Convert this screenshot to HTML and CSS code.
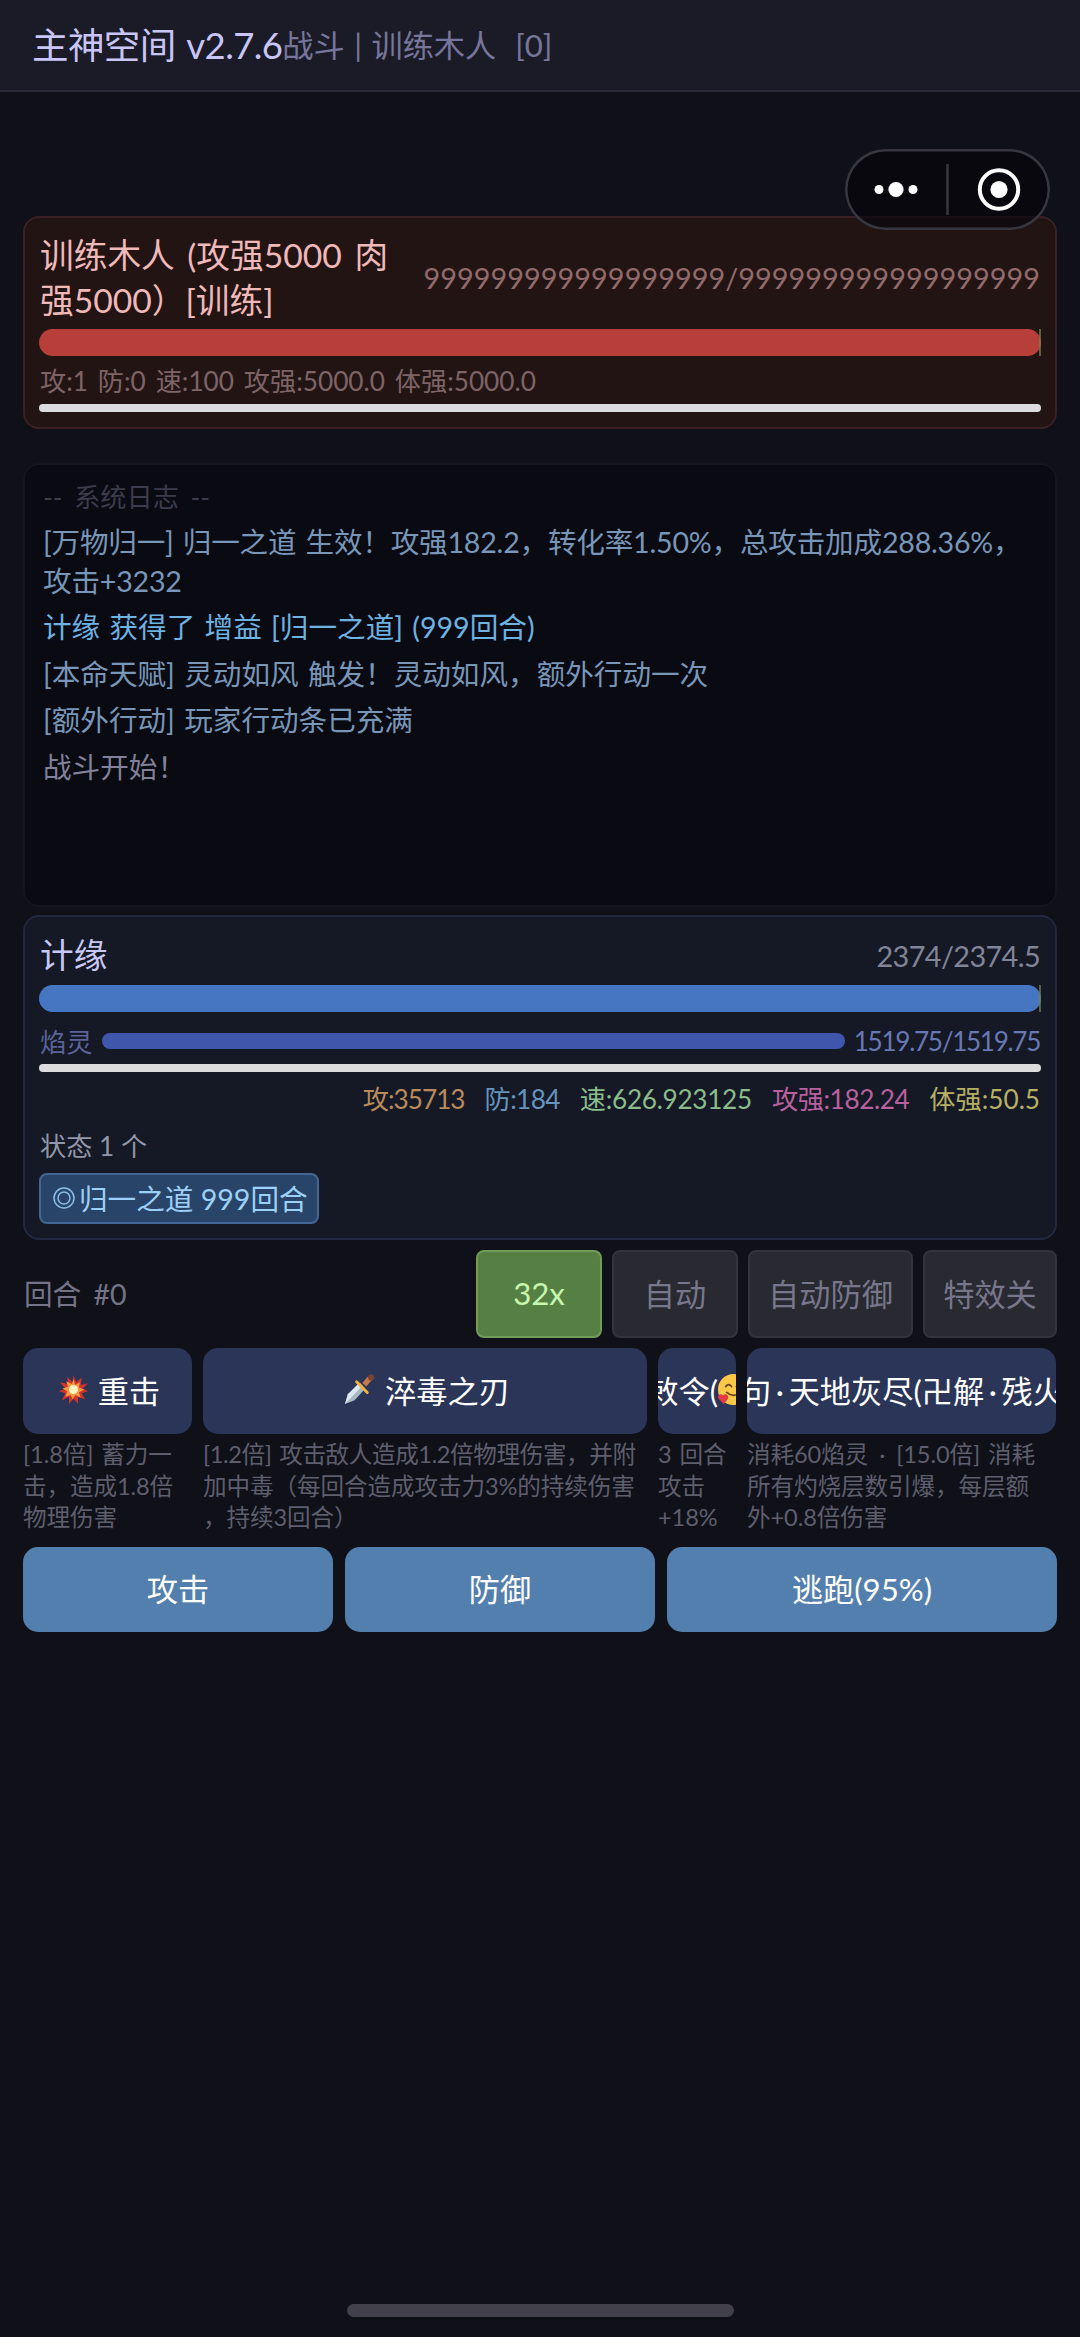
FILE: index.html
```
<!DOCTYPE html>
<html lang="zh-CN">
<head>
<meta charset="utf-8">
<title>主神空间</title>
<link rel="stylesheet" href="styles.css">
</head>
<body>
<header class="topbar">
  <h1 class="app-title">主神空间 v2.7.6</h1>
  <span class="app-sub">战斗 | 训练木人&nbsp; [0]</span>
</header>

<div class="capsule">
  <svg class="capsule-icon" width="205" height="81" viewBox="0 0 205 81">
    <g fill="#fff"><circle cx="34" cy="40.5" r="4.5"/><circle cx="51" cy="40.5" r="7.6"/><circle cx="68" cy="40.5" r="4.5"/><circle cx="154" cy="40.5" r="8.6"/></g>
    <path d="M102.500 15v51" stroke="#38363f" stroke-width="2.500"/>
    <circle cx="154" cy="40.500" r="19.200" fill="none" stroke="#fff" stroke-width="4"/>
  </svg>
</div>

<main class="battle">
  <section class="card enemy">
    <div class="head">
      <div class="name">训练木人 (攻强5000 肉强5000）[训练]</div>
      <div class="hp-text enemy-hp">999999999999999999/999999999999999999</div>
    </div>
    <div class="hp-bar red"></div>
    <div class="enemy-stats">攻:1 防:0 速:100 攻强:5000.0 体强:5000.0</div>
    <div class="action-bar"></div>
  </section>

  <section class="log">
    <p class="log-title">-- 系统日志 --</p>
    <p class="info first">[万物归一] 归一之道 生效！攻强182.2，转化率1.50%，总攻击加成288.36%，<br>攻击+3232</p>
    <p class="buff">计缘 获得了 增益 [归一之道] (999回合)</p>
    <p class="info">[本命天赋] 灵动如风 触发！灵动如风，额外行动一次</p>
    <p class="info">[额外行动] 玩家行动条已充满</p>
    <p class="plain">战斗开始！</p>
  </section>

  <section class="card player">
    <div class="head">
      <div class="name">计缘</div>
      <div class="hp-text">2374/2374.5</div>
    </div>
    <div class="hp-bar blue"></div>
    <div class="mana"><span class="mana-name">焰灵</span><div class="mana-bar"></div><span class="mana-num">1519.75/1519.75</span></div>
    <div class="action-bar"></div>
    <div class="stats">
      <span class="atk">攻:35713</span><span class="def">防:184</span><span class="spd">速:626.923125</span><span class="pow">攻强:182.24</span><span class="vit">体强:50.5</span>
    </div>
    <div class="status">状态 1 个</div>
    <div class="chip"><svg width="22" height="22" viewBox="0 0 22 22" fill="none" stroke="#8bbfe8" stroke-width="1.500"><circle cx="11" cy="11" r="10"/><circle cx="11" cy="11" r="6"/></svg><span>归一之道 999回合</span></div>
  </section>

  <div class="controls">
    <span class="round">回合 #0</span>
    <button class="ctl speed">32x</button>
    <button class="ctl auto">自动</button>
    <button class="ctl guard">自动防御</button>
    <button class="ctl fx">特效关</button>
  </div>

  <div class="skills">
    <div class="skill">
      <button class="skill-btn">
        <svg class="emoji" width="29" height="29" viewBox="0 0 32 32"><path fill="#d5322d" d="M16 0l3 8 6-5-1 8 8-2-6 6 6 3-7 2 4 7-8-3 0 8-5-6-5 6 0-8-8 4 4-8-7-2 7-3-6-7 9 2-1-8 6 6z"/><path fill="#f79a3e" d="M16 5l2 6 5-3-1 6 6 2-6 3 2 6-6-3-3 5-2-5-6 2 2-6-5-3 6-2-2-6 6 3z"/><circle cx="16" cy="16" r="5" fill="#fff3c4"/></svg>
        <span>重击</span>
      </button>
      <p>[1.8倍] 蓄力一<br>击，造成1.8倍<br>物理伤害</p>
    </div>
    <div class="skill">
      <button class="skill-btn">
        <svg class="emoji" width="31" height="31" viewBox="0 0 32 32"><path fill="#a7b8c4" d="M1 31l3-10 12-12 6 6-11 12z"/><path fill="#dce7ee" d="M1 31l3-10 12-12 3 3z"/><path d="M21 11l6-7" stroke="#c47a4c" stroke-width="5.500"/><circle cx="28" cy="3.500" r="3.200" fill="#7a4230"/><path d="M13 8l11 11" stroke="#f2b13c" stroke-width="3" stroke-linecap="round"/></svg>
        <span>淬毒之刃</span>
      </button>
      <p><span class="tight">[1.2倍] 攻击敌人造成1.2倍物理伤害，并附</span><br>加中毒（每回合造成攻击力3%的持续伤害<br>，持续3回合）</p>
    </div>
    <div class="skill">
      <button class="skill-btn cut">
        <span>敕令(</span>
        <svg class="face" width="31" height="31" viewBox="0 0 32 32"><circle cx="16" cy="16" r="16" fill="#fbc748"/><path d="M8 13q3-4 6 0M19 13q3-4 6 0M9 19q7 6 14 0" fill="none" stroke="#6d4322" stroke-width="1.800" stroke-linecap="round"/><path fill="#e33a45" d="M6 31l-5-5c-3-4 2-7 4-4 3-3 7 0 5 4z"/></svg>
      </button>
      <p>3 回合<br>攻击<br>+18%</p>
    </div>
    <div class="skill">
      <button class="skill-btn cut"><span class="long-name">句<i>·</i>天地灰尽(卍解<i>·</i>残火</span></button>
      <p>消耗60焰灵<i>·</i>[15.0倍] 消耗<br>所有灼烧层数引爆，每层额<br>外+0.8倍伤害</p>
    </div>
  </div>

  <div class="actions">
    <button>攻击</button>
    <button>防御</button>
    <button>逃跑(95%)</button>
  </div>
</main>
<div class="home-bar"></div>
</body>
</html>
```
FILE: styles.css
```
* { box-sizing: border-box; }
body {
  margin: 0;
  width: 1080px;
  height: 2337px;
  overflow: hidden;
  position: relative;
  background: #0f1018;
  font-family: Lato, "Noto Sans CJK SC", sans-serif;
  font-weight: 400;
  font-variant-ligatures: none;
  word-spacing: 2px;
}
p, h1 { margin: 0; font-weight: 400; }
button { border: 0; padding: 0 0 4px; font: inherit; }

.topbar {
  height: 92px;
  padding: 0 0 4px 32px;
  display: flex;
  align-items: center;
  background: #1b1b28;
  border-bottom: 2px solid #2b2a38;
}
.app-title { font-size: 36.5px; letter-spacing: -.6px; color: #c9c6f7; white-space: nowrap; }
.app-sub { font-size: 31.2px; word-spacing: 1.5px; color: #77769a; white-space: nowrap; }

.capsule {
  position: absolute;
  z-index: 2;
  left: 845px;
  top: 149px;
  width: 205px;
  height: 81px;
  border-radius: 41px;
  background: rgba(5, 4, 10, .6);
  box-shadow: inset 0 0 0 2.5px #38363f;
}
.capsule-icon { display: block; }

.battle { padding: 124px 23px 0; }
.card { border: 2px solid; border-radius: 16px; padding: 0 14px; }
.enemy { height: 213px; padding-top: 15px; background: #231414; border-color: #3a2125; }
.head { display: flex; justify-content: space-between; align-items: center; padding: 0 1px; }
.name { font-size: 33.7px; line-height: 45px; word-spacing: 4px; }
.enemy .name { width: 362px; color: #f0b9b9; }
.hp-text { font-size: 28.8px; letter-spacing: -.6px; }
.enemy-hp { color: #916a6c; letter-spacing: .06px; }
.hp-bar { height: 27px; margin-top: 6px; border-radius: 14px; position: relative; }
.hp-bar::after { content: ""; position: absolute; right: 0; top: 0; width: 2px; height: 27px; background: rgba(120, 130, 80, .7); }
.red { background: #b83e39; }
.blue { background: #4676c2; }
.enemy-stats { margin-top: 7px; padding-left: 1px; font-size: 26.2px; line-height: 36px; word-spacing: 3.2px; color: #7d6466; }
.action-bar { height: 8px; margin-top: 5px; border-radius: 4px; background: #dcdcdc; }

.log {
  height: 444px;
  margin-top: 34px;
  padding: 14px 18px;
  border: 2px solid #14151d;
  border-radius: 16px;
  background: #090a12;
  font-size: 28.6px;
  line-height: 38.6px;
  white-space: nowrap;
}
.log p + p { margin-top: 8px; }
.log .log-title { font-size: 26.2px; line-height: 36px; word-spacing: 5px; color: #3d3b4c; }
.info { color: #7896b8; }
.first { letter-spacing: -.2px; }
.buff { color: #6cb2e2; }
.plain { color: #83819a; }

.player { height: 325px; margin-top: 8px; padding-top: 16px; background: #151825; border-color: #222840; }
.player .name { color: #c8c8f5; }
.player .hp-text { color: #818598; }
.player .hp-bar { margin-top: 7px; }
.mana { display: flex; align-items: center; gap: 9px; height: 36px; margin-top: 11px; padding: 0 1px; font-size: 26.2px; }
.mana-name { color: #5b6498; width: 53px; }
.mana-bar { flex: 1; height: 16px; border-radius: 8px; background: #4056ac; }
.mana-num { color: #6778b4; letter-spacing: -1.35px; }
.player .action-bar { margin-top: 5px; }
.stats { display: flex; justify-content: flex-end; gap: 20px; margin-top: 8px; padding-right: 1px; font-size: 26.2px; line-height: 38px; }
.atk { color: #b98a5c; letter-spacing: -1px; }
.def { color: #6594bd; letter-spacing: -.6px; }
.spd { color: #8bbd8c; letter-spacing: -.3px; }
.pow { color: #b9619f; letter-spacing: -.4px; }
.vit { color: #b5b063; }
.status { margin-top: 10px; padding-left: 1px; font-size: 26.2px; line-height: 36px; word-spacing: 0; color: #9296a8; }
.chip {
  display: flex;
  align-items: center;
  gap: 4px;
  width: 280px;
  height: 51px;
  margin-top: 9px;
  padding: 0 0 2px 12px;
  border: 2px solid #436794;
  border-radius: 8px;
  background: #284468;
  color: #9dd0f7;
  font-size: 28.6px;
  word-spacing: 0;
  white-space: nowrap;
}

.controls { display: grid; grid-template-columns: 443px 126px 126px 165px 134px; column-gap: 10px; height: 88px; margin-top: 10px; align-items: center; }
.round { padding: 0 0 3px 1px; font-size: 28.6px; word-spacing: 5px; color: #757487; }
.ctl { height: 88px; border: 2px solid #34333d; border-radius: 8px; background: #292931; color: #77768a; font-size: 31.2px; }
.speed { background: #568043; border-color: #709b58; color: #c9f7b0; padding-bottom: 2px; }

.skills { display: grid; grid-template-columns: 169px 444px 78px 309px; column-gap: 11px; margin-top: 10px; }
.skill-btn {
  display: flex;
  align-items: center;
  justify-content: center;
  gap: 10px;
  width: 100%;
  height: 86px;
  padding-left: 4px;
  border-radius: 15px;
  background: #2a3558;
  color: #fff;
  font-size: 31.2px;
  overflow: hidden;
  white-space: nowrap;
}
.cut { justify-content: flex-end; gap: 0; }
.skill p { margin-top: 5px; font-size: 23.6px; line-height: 31.6px; letter-spacing: -.1px; color: #5f5e6e; white-space: nowrap; }
.skill p i { display: inline-block; width: 28px; text-align: center; font-style: normal; }
.tight { letter-spacing: -.4px; }
.emoji, .face { flex: none; }
.face { margin-right: -13px; }
.long-name { margin-right: -8px; }
.long-name i { display: inline-block; width: 17.5px; text-align: center; font-style: normal; }

.actions { display: grid; grid-template-columns: 310px 310px 390px; column-gap: 12px; margin-top: 13px; }
.actions button { height: 85px; border-radius: 15px; background: #537fae; color: #fff; font-size: 31.2px; }

.home-bar { position: absolute; left: 347px; top: 2304px; width: 387px; height: 13px; border-radius: 7px; background: #42414b; }
```
